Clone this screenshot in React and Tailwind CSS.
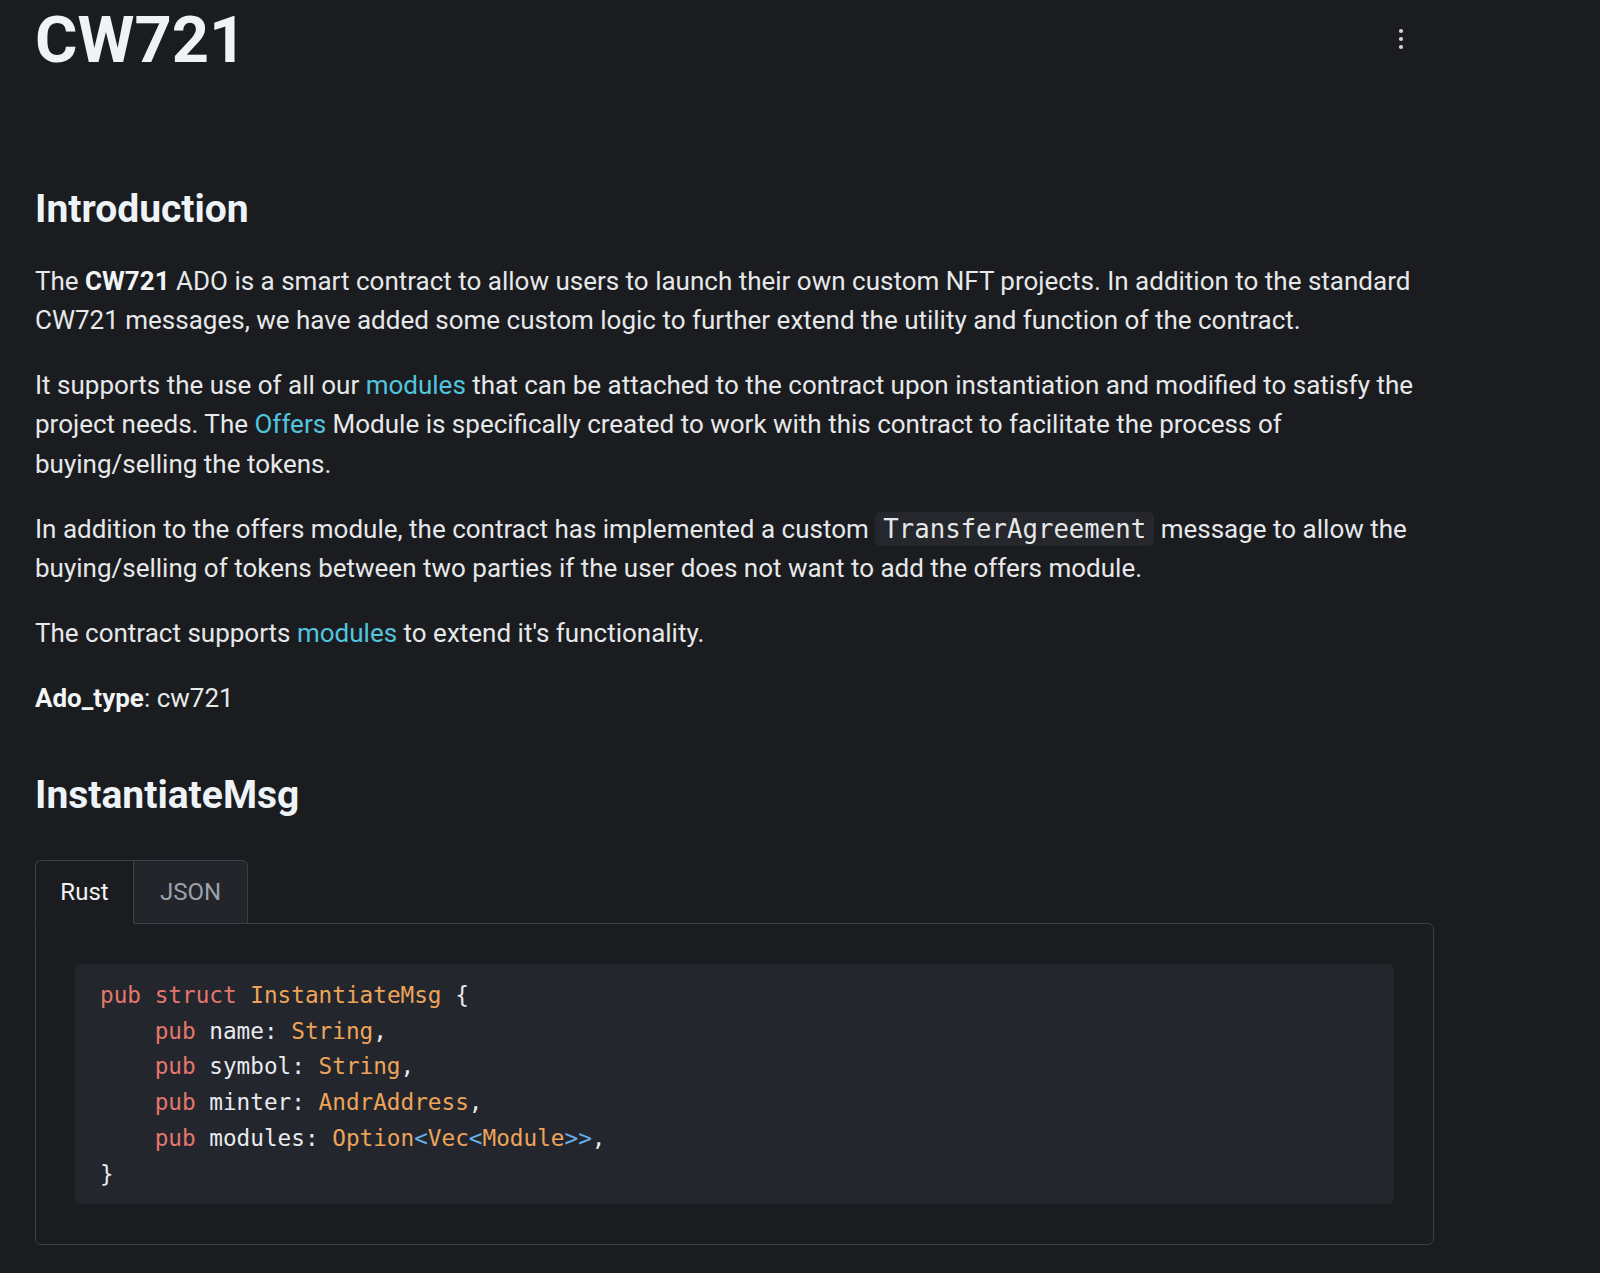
import React from "react";

const kw = "text-[#e5766c]";
const ty = "text-[#eda45a]";
const pn = "text-[#6aaee8]";

function CodeLine({ children }) {
  return <div className="whitespace-pre">{children}</div>;
}

function Link({ children }) {
  return <a className="text-[#52c4de]">{children}</a>;
}

export default function App() {
  return (
    <div className="min-h-screen w-full bg-[#1b1c1f] font-[Roboto,sans-serif] text-[#e6e8ea]">
      <div className="w-[1399px] ml-[35px] pb-[28px]">
        <header className="flex items-start justify-between pt-[7px]">
          <h1 className="text-[65px] leading-[66px] font-bold text-[#eef3f7]">CW721</h1>
          <button className="mt-[20px] mr-[21px] text-[#d4d4d4]">
            <svg width="24" height="24" viewBox="0 0 24 24" fill="currentColor">
              <circle cx="12" cy="4" r="2.1" />
              <circle cx="12" cy="12" r="2.1" />
              <circle cx="12" cy="20" r="2.1" />
            </svg>
          </button>
        </header>

        <h2 className="mt-[112px] text-[39px] leading-[48px] font-bold text-[#eef3f7]">Introduction</h2>

        <div className="mt-[29px] text-[26px] leading-[39.3px] flex flex-col gap-[25.6px]">
          <p>
            The <b className="font-bold text-[#f2f4f6]">CW721</b> ADO is a smart contract to allow users to launch their own custom NFT projects. In addition to the standard CW721 messages, we have added some custom logic to further extend the utility and function of the contract.
          </p>
          <p>
            It supports the use of all our <Link>modules</Link> that can be attached to the contract upon instantiation and modified to satisfy the project needs. The <Link>Offers</Link> Module is specifically created to work with this contract to facilitate the process of
            <br />
            buying/selling the tokens.
          </p>
          <p>
            In addition to the offers module, the contract has implemented a custom{" "}
            <code className="font-['DejaVu_Sans_Mono',monospace] text-[25.7px] leading-none bg-[#25272d] rounded-md px-[8px] py-[2px] text-[#e6e8ea]">
              TransferAgreement
            </code>{" "}
            message to allow the buying/selling of tokens between two parties if the user does not want to add the offers module.
          </p>
          <p>
            The contract supports <Link>modules</Link> to extend it's functionality.
          </p>
          <p>
            <b className="font-bold text-[#f2f4f6]">Ado_type</b>: cw721
          </p>
        </div>

        <h2 className="mt-[53px] text-[39px] leading-[48px] font-bold text-[#eef3f7]">InstantiateMsg</h2>

        <div className="mt-[41px]">
          <div className="relative z-10 flex -mb-px text-[24px]">
            <div className="w-[99px] h-[64px] flex items-center justify-center border border-[#3a3f4b] border-b-[#1b1c1f] rounded-tl-md bg-[#1b1c1f] text-[#f0f2f4]">
              Rust
            </div>
            <div className="w-[114px] h-[64px] flex items-center justify-center border border-l-0 border-[#3a3f4b] rounded-tr-md bg-[#23252b] text-[#9ba1aa]">
              JSON
            </div>
          </div>
          <div className="border border-[#3a3f4b] rounded-b-md rounded-tr-md px-[39px] py-[40px]">
            <pre className="bg-[#24262d] rounded-md pl-[25px] pt-[14px] pb-[12px] font-['DejaVu_Sans_Mono',monospace] text-[22.7px] leading-[35.7px] text-[#e8eaed]">
              <CodeLine>
                <span className={kw}>pub</span> <span className={kw}>struct</span> <span className={ty}>InstantiateMsg</span> {"{"}
              </CodeLine>
              <CodeLine>
                {"    "}<span className={kw}>pub</span> name: <span className={ty}>String</span>,
              </CodeLine>
              <CodeLine>
                {"    "}<span className={kw}>pub</span> symbol: <span className={ty}>String</span>,
              </CodeLine>
              <CodeLine>
                {"    "}<span className={kw}>pub</span> minter: <span className={ty}>AndrAddress</span>,
              </CodeLine>
              <CodeLine>
                {"    "}<span className={kw}>pub</span> modules: <span className={ty}>Option</span><span className={pn}>&lt;</span><span className={ty}>Vec</span><span className={pn}>&lt;</span><span className={ty}>Module</span><span className={pn}>&gt;&gt;</span>,
              </CodeLine>
              <CodeLine>{"}"}</CodeLine>
            </pre>
          </div>
        </div>
      </div>
    </div>
  );
}
